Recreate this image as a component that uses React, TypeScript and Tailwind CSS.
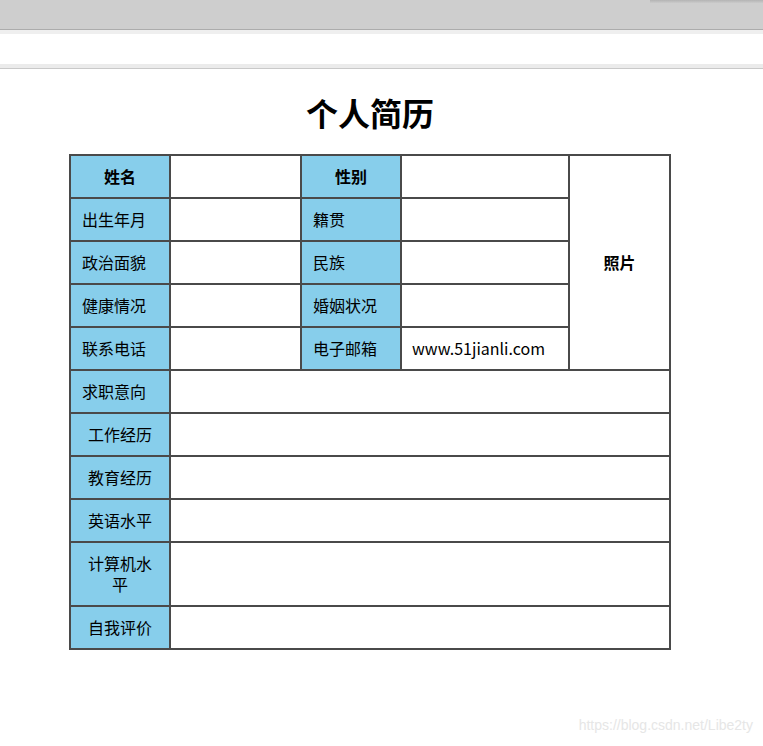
import React from "react"

const cjk = { fontFamily: '"Noto Sans CJK SC", "Noto Sans", sans-serif' }

const cell = "border-2 border-[#4a4a4a] px-[11px] py-[10px] leading-[21px] text-[16px] text-black align-middle"
const label = `${cell} bg-[#87ceeb]`

const infoRows = [
  { a: "出生年月", b: "籍贯", v: "" },
  { a: "政治面貌", b: "民族", v: "" },
  { a: "健康情况", b: "婚姻状况", v: "" },
  { a: "联系电话", b: "电子邮箱", v: "www.51jianli.com" },
]

const longRows: { name: string; align: "left" | "center" }[] = [
  { name: "求职意向", align: "left" },
  { name: "工作经历", align: "center" },
  { name: "教育经历", align: "center" },
  { name: "英语水平", align: "center" },
  { name: "计算机水平", align: "center" },
  { name: "自我评价", align: "center" },
]

export default function App() {
  return (
    <div className="relative h-[746px] w-[763px] overflow-hidden bg-white" style={cjk}>
      {/* browser chrome */}
      <div className="flex h-[29px] items-start bg-[#cecece]">
        <div className="ml-auto h-[3px] w-[113px] bg-gradient-to-b from-[#b4b4b4] to-[#cacaca]" />
      </div>
      <div className="h-px bg-[#acacac]" />
      <div className="h-[4px] bg-[#efefef]" />
      <div className="h-[30px] bg-white" />
      <div className="h-[4px] bg-[#ebebeb]" />
      <div className="h-px bg-[#c9c9c9]" />

      <div className="w-[740px] pt-[20px]">
        <h1 className="mb-[19px] text-center text-[32px] font-bold leading-[46px] text-black">个人简历</h1>

        <table className="ml-[69px] w-[600px] table-fixed border-collapse border-2 border-[#4a4a4a]">
          <colgroup>
            <col className="w-[100px]" />
            <col className="w-[131px]" />
            <col className="w-[100px]" />
            <col className="w-[168px]" />
            <col className="w-[101px]" />
          </colgroup>
          <tbody>
            <tr>
              <td className={`${label} text-center font-bold`}>姓名</td>
              <td className={cell}></td>
              <td className={`${label} text-center font-bold`}>性别</td>
              <td className={cell}></td>
              <td rowSpan={5} className={`${cell} text-center font-bold`}>照片</td>
            </tr>
            {infoRows.map((r) => (
              <tr key={r.a}>
                <td className={label}>{r.a}</td>
                <td className={cell}></td>
                <td className={label}>{r.b}</td>
                <td className={`${cell} pl-[10px]`}>{r.v}</td>
              </tr>
            ))}
            {longRows.map((r) => (
              <tr key={r.name}>
                <td className={`${label} ${r.align === "center" ? "text-center" : "text-left"}`}>{r.name}</td>
                <td colSpan={4} className={cell}></td>
              </tr>
            ))}
          </tbody>
        </table>
      </div>

      <div
        className="absolute right-[10px] bottom-[10px] text-[14px] text-[#e6e6e6]"
        style={{ fontFamily: '"Liberation Sans", Arial, sans-serif' }}
      >
        https://blog.csdn.net/Libe2ty
      </div>
    </div>
  )
}
